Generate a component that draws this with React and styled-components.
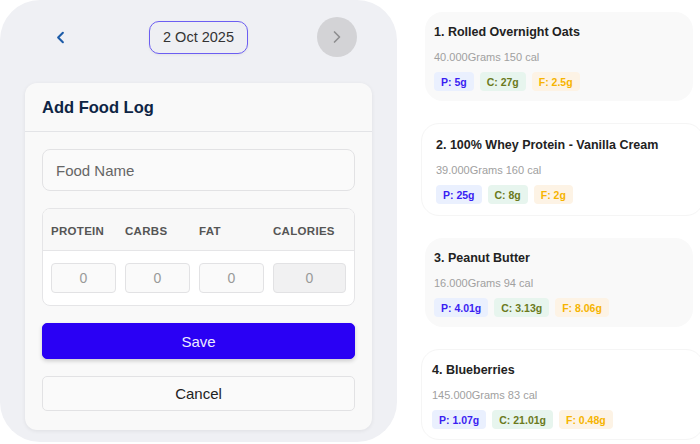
import React from 'react';
import styled, { createGlobalStyle } from 'styled-components';
import { ChevronLeft, ChevronRight } from 'lucide-react';

const GlobalStyle = createGlobalStyle`
  body {
    margin: 0;
    background: #ffffff;
    font-family: "Liberation Sans", Arial, sans-serif;
  }
  * { box-sizing: border-box; }
`;

const foods = [
  { name: 'Rolled Overnight Oats', grams: '40.000', cal: 150, p: '5g', c: '27g', f: '2.5g' },
  { name: '100% Whey Protein - Vanilla Cream', grams: '39.000', cal: 160, p: '25g', c: '8g', f: '2g' },
  { name: 'Peanut Butter', grams: '16.000', cal: 94, p: '4.01g', c: '3.13g', f: '8.06g' },
  { name: 'Blueberries', grams: '145.000', cal: 83, p: '1.07g', c: '21.01g', f: '0.48g' },
];

const Page = () => {
  return (
    <Layout>
      <GlobalStyle />
      <Panel>
        <Nav>
          <NavButton><ChevronLeft size={19} strokeWidth={2.6} color="#1d5ca8" /></NavButton>
          <DatePill>2 Oct 2025</DatePill>
          <NavButton $round><ChevronRight size={20} strokeWidth={2} color="#8e8e90" /></NavButton>
        </Nav>
        <Card>
          <CardHeader>Add Food Log</CardHeader>
          <CardBody>
            <TextInput placeholder="Food Name" />
            <MacroTable>
              <MacroHead>
                <span>Protein</span>
                <span>Carbs</span>
                <span>Fat</span>
                <span>Calories</span>
              </MacroHead>
              <MacroRow>
                <MacroInput defaultValue="0" />
                <MacroInput defaultValue="0" />
                <MacroInput defaultValue="0" />
                <MacroInput defaultValue="0" readOnly $disabled />
              </MacroRow>
            </MacroTable>
            <Button $primary>Save</Button>
            <Button>Cancel</Button>
          </CardBody>
        </Card>
      </Panel>

      <List>
        {foods.map((food, i) => (
          <FoodCard key={food.name} $even={i % 2 === 1} $wide={i === 1}>
            <FoodTitle>{i + 1}. {food.name}</FoodTitle>
            <FoodMeta>{food.grams}Grams {food.cal} cal</FoodMeta>
            <Badges>
              <Badge $kind="p">P: {food.p}</Badge>
              <Badge $kind="c">C: {food.c}</Badge>
              <Badge $kind="f">F: {food.f}</Badge>
            </Badges>
          </FoodCard>
        ))}
      </List>
    </Layout>
  );
};

const Layout = styled.div`
  display: flex;
  align-items: flex-start;
  gap: 26px;
  width: 700px;
  height: 444px;
  overflow: hidden;
`;

const Panel = styled.div`
  flex: 0 0 397px;
  height: 442px;
  background: #eff0f4;
  border-radius: 40px;
  padding-top: 17px;
`;

const Nav = styled.div`
  display: flex;
  align-items: center;
  justify-content: space-between;
  padding: 0 40px;
`;

const NavButton = styled.div`
  width: 40px;
  height: 40px;
  border-radius: 50%;
  display: flex;
  align-items: center;
  justify-content: center;
  background: ${p => (p.$round ? '#d3d3d6' : 'transparent')};
`;

const DatePill = styled.div`
  width: 99px;
  height: 33px;
  border: 1.5px solid #6c5ef2;
  border-radius: 10px;
  background: #eeeff3;
  display: flex;
  align-items: center;
  justify-content: center;
  font-size: 14.5px;
  color: #333;
  box-shadow: 0 1px 3px rgba(0, 0, 0, 0.06);
`;

const Card = styled.div`
  margin: 26px 25px 0;
  height: 347px;
  background: #f9f9f9;
  border-radius: 12px;
  box-shadow: 0 1px 4px rgba(0, 0, 0, 0.07);
  overflow: hidden;
`;

const CardHeader = styled.div`
  height: 49px;
  padding: 1px 17px 0;
  display: flex;
  align-items: center;
  border-bottom: 1px solid #e3e4e7;
  font-size: 16.5px;
  font-weight: 700;
  color: #0e2545;
`;

const CardBody = styled.div`
  display: flex;
  flex-direction: column;
  gap: 17px;
  padding: 17px 17px 0;
`;

const TextInput = styled.input`
  height: 42px;
  border: 1px solid #e2e2e4;
  border-radius: 8px;
  background: #fafafa;
  padding: 0 13px;
  font-family: inherit;
  font-size: 15px;
  color: #333;
  outline: none;
  &::placeholder { color: #666; }
`;

const MacroTable = styled.div`
  height: 98px;
  border: 1px solid #e5e5e7;
  border-radius: 8px;
  overflow: hidden;
  background: #ffffff;
`;

const MacroHead = styled.div`
  display: grid;
  grid-template-columns: 65px 65px 65px 1fr;
  gap: 9px;
  align-items: center;
  height: 42px;
  padding: 2px 8px 0 8px;
  background: #f8f8f8;
  border-bottom: 1px solid #e5e5e7;
  span {
    font-size: 11.5px;
    font-weight: 700;
    letter-spacing: 0.3px;
    text-transform: uppercase;
    color: #555;
  }
`;

const MacroRow = styled.div`
  display: grid;
  grid-template-columns: 65px 65px 65px 1fr;
  gap: 9px;
  padding: 12px 8px 0 8px;
`;

const MacroInput = styled.input`
  width: 100%;
  height: 30px;
  border: 1px solid #e2e2e4;
  border-radius: 4px;
  background: ${p => (p.$disabled ? '#f1f1f2' : '#fafafa')};
  text-align: center;
  font-family: inherit;
  font-size: 14px;
  color: #999;
  outline: none;
`;

const Button = styled.button`
  height: ${p => (p.$primary ? '36px' : '35px')};
  border-radius: 5px;
  border: 1px solid ${p => (p.$primary ? '#2a00f4' : '#e2e2e4')};
  background: ${p => (p.$primary ? '#2a00f4' : '#fafafa')};
  color: ${p => (p.$primary ? '#ecebff' : '#222')};
  box-shadow: ${p => (p.$primary ? '0 2px 4px rgba(0, 0, 0, 0.18)' : 'none')};
  font-family: inherit;
  font-size: 15px;
`;

const List = styled.div`
  flex: 1;
  display: flex;
  flex-direction: column;
  gap: 22px;
  padding-top: 12px;
  min-width: 0;
`;

const FoodCard = styled.div`
  margin-left: ${p => (p.$even ? '-2px' : '2px')};
  margin-right: ${p => (p.$even ? '-4px' : '7px')};
  padding: ${p => (p.$wide ? '14px 14px 11px' : p.$even ? '13px 10px 10px' : '12px 8px 9px')};
  border-radius: 18px;
  background: ${p => (p.$even ? '#ffffff' : '#f9f9f9')};
  border: 1px solid ${p => (p.$even ? '#f5f5f5' : 'transparent')};
`;

const FoodTitle = styled.div`
  font-size: 12.5px;
  font-weight: 700;
  line-height: 15px;
  color: #222;
  white-space: nowrap;
`;

const FoodMeta = styled.div`
  margin-top: 10px;
  font-size: 11px;
  line-height: 14px;
  color: #a0a0a0;
`;

const badgeColors = {
  p: { bg: '#eaf0fe', fg: '#3a1ef2' },
  c: { bg: '#e7f5ee', fg: '#6b7a1c' },
  f: { bg: '#fdf3e5', fg: '#f6b400' },
};

const Badges = styled.div`
  display: flex;
  gap: 6px;
  margin-top: 8px;
`;

const Badge = styled.span`
  height: 19px;
  padding: 0 7px;
  display: inline-flex;
  align-items: center;
  border-radius: 4px;
  font-size: 10.5px;
  font-weight: 700;
  background: ${p => badgeColors[p.$kind].bg};
  color: ${p => badgeColors[p.$kind].fg};
`;

export default Page;
